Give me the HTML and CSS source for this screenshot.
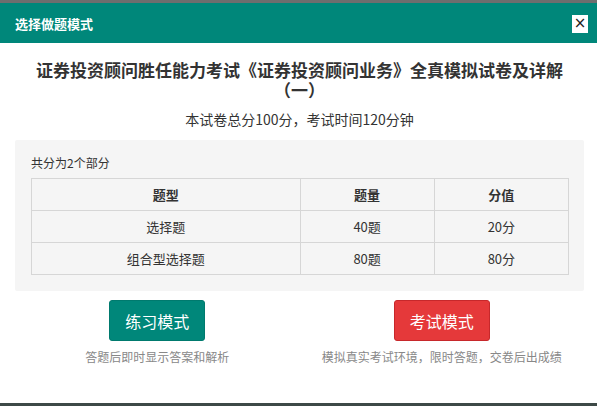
FILE: index.html
```html
<!DOCTYPE html>
<html>
<head>
<meta charset="utf-8">
<link rel="stylesheet" href="styles.css">
</head>
<body>
<div class="topstrip"></div>
<div class="modal">
  <div class="header">
    <span class="htitle">选择做题模式</span>
    <span class="close">×</span>
  </div>
  <div class="content">
    <h1 class="title">证券投资顾问胜任能力考试《证券投资顾问业务》全真模拟试卷及详解（一）</h1>
    <p class="sub">本试卷总分100分，考试时间120分钟</p>
    <div class="panel">
      <p class="parts">共分为2个部分</p>
      <table class="tbl">
        <thead>
          <tr><th class="c1">题型</th><th>题量</th><th>分值</th></tr>
        </thead>
        <tbody>
          <tr><td>选择题</td><td>40题</td><td>20分</td></tr>
          <tr><td>组合型选择题</td><td>80题</td><td>80分</td></tr>
        </tbody>
      </table>
    </div>
    <div class="modes">
      <div class="mode">
        <button class="btn green">练习模式</button>
        <p class="desc">答题后即时显示答案和解析</p>
      </div>
      <div class="mode">
        <button class="btn red">考试模式</button>
        <p class="desc">模拟真实考试环境，限时答题，交卷后出成绩</p>
      </div>
    </div>
  </div>
</div>
<div class="bottomstrip"></div>
</body>
</html>
```
FILE: styles.css
```css
* { box-sizing: border-box; }
html, body {
  margin: 0;
  padding: 0;
  width: 597px;
  height: 406px;
  overflow: hidden;
  background: #ffffff;
  font-family: "Noto Sans CJK SC", "Noto Sans", sans-serif;
  color: #333;
}
.topstrip { height: 3px; background: #6e6e6e; }
.bottomstrip { height: 3px; background: #3d4947; }
.modal { height: 400px; background: #fff; display: flex; flex-direction: column; }
.header {
  height: 40px;
  background: #00877a;
  display: flex;
  align-items: center;
  justify-content: space-between;
  padding: 0 9px 0 15px;
}
.htitle { color: #fff; font-size: 13px; font-weight: bold; line-height: 1; }
.close {
  width: 16px;
  height: 18px;
  background: #fff;
  color: #222;
  font-size: 15px;
  line-height: 17px;
  text-align: center;
  font-family: "DejaVu Sans", sans-serif;
  margin-top: 2px;
}
.content { padding: 0 13px 0 15px; flex: 1; }
.title {
  margin: 17px 0 0;
  font-size: 17px;
  line-height: 20px;
  font-weight: bold;
  text-align: center;
  color: #333;
  padding: 0 15px;
}
.sub { margin: 10px 0 0; font-size: 14px; line-height: 18px; text-align: center; color: #333; }
.panel {
  margin-top: 12px;
  background: #f5f5f5;
  padding: 14px 15px 16px 16px;
  border-radius: 2px;
}
.parts { margin: 0 0 6px; font-size: 12px; line-height: 18px; color: #333; }
.tbl {
  width: 100%;
  border-collapse: collapse;
  font-size: 13px;
  color: #333;
}
.tbl th, .tbl td {
  border: 1px solid #d6d6d6;
  height: 32px;
  text-align: center;
  padding: 0;
  width: 25%;
}
.tbl th { font-weight: bold; }
.tbl th.c1 { width: 50%; }
.modes { display: flex; margin-top: 9px; }
.mode { flex: 1; display: flex; flex-direction: column; align-items: center; }
.btn {
  width: 96px;
  height: 41px;
  border-radius: 3px;
  font-family: inherit;
  font-size: 16px;
  color: #fff;
  border: 1px solid transparent;
  padding: 0;
  cursor: pointer;
}
.btn.green { background: #00877a; border-color: #007a6e; }
.btn.red { background: #e5393a; border-color: #c7282b; }
.desc { margin: 7px 0 0; font-size: 12px; line-height: 18px; color: #888; }
```
